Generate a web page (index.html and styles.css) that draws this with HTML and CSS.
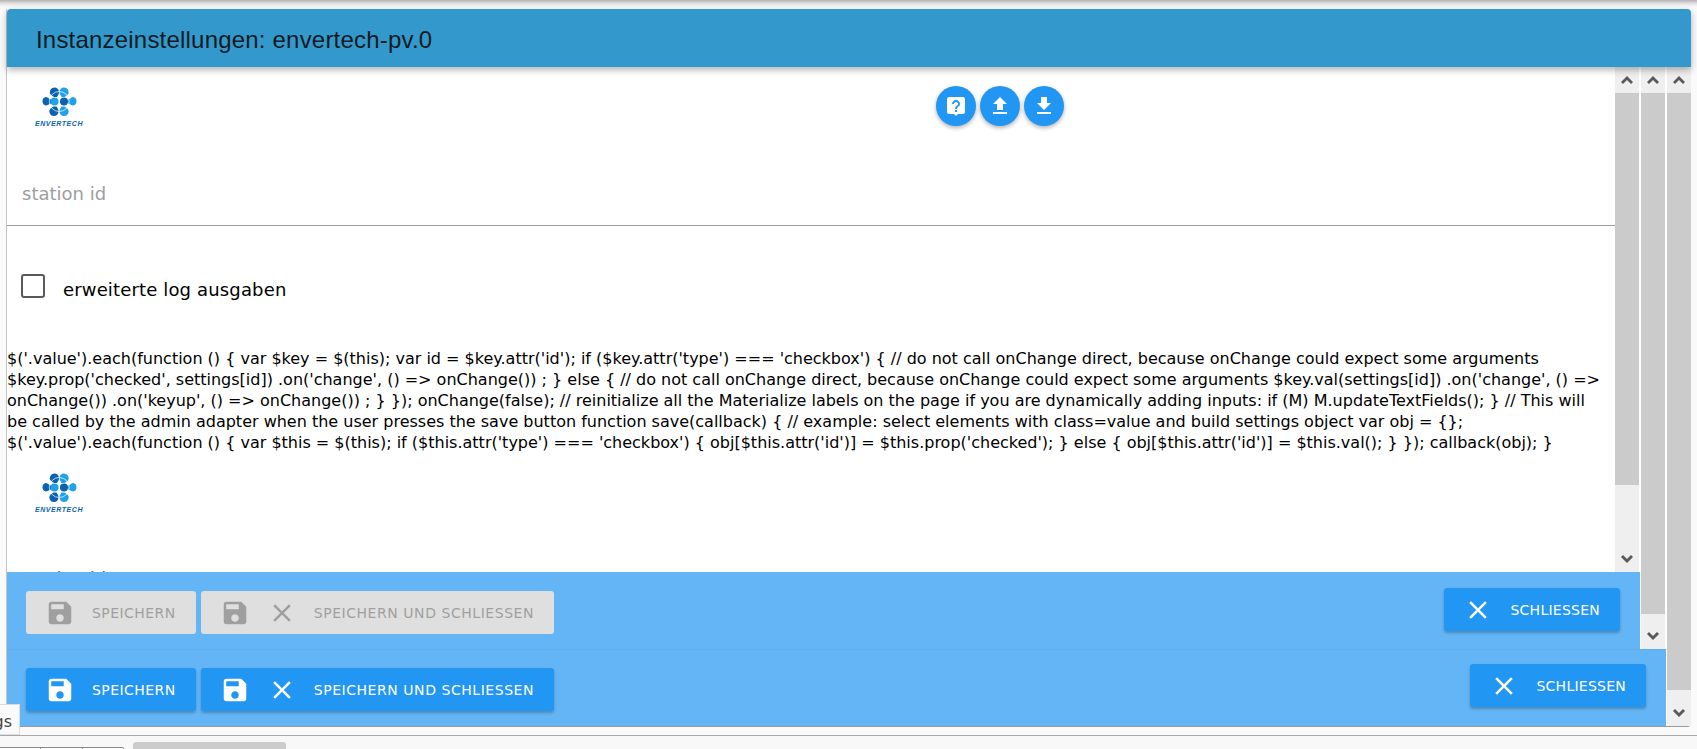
FILE: index.html
```html
<!DOCTYPE html>
<html lang="de">
<head>
<meta charset="utf-8">
<title>Instanzeinstellungen</title>
<link rel="stylesheet" href="styles.css">
</head>
<body>
<svg class="defs" width="0" height="0" aria-hidden="true">
  <symbol id="i-save" viewBox="0 0 24 24"><path d="M17 3H5c-1.11 0-2 .9-2 2v14c0 1.1.89 2 2 2h14c1.1 0 2-.9 2-2V7l-4-4zm-5 16c-1.66 0-3-1.34-3-3s1.34-3 3-3 3 1.34 3 3-1.34 3-3 3zm3-10H5V5h10v4z"/></symbol>
  <symbol id="i-close" viewBox="0 0 24 24"><path d="M19 6.41L17.59 5 12 10.59 6.41 5 5 6.41 10.59 12 5 17.59 6.41 19 12 13.41 17.59 19 19 17.59 13.41 12z"/></symbol>
  <symbol id="i-up" viewBox="0 0 12 8"><path d="M6 0l6 6-2 2-4-4-4 4-2-2z"/></symbol>
  <symbol id="i-down" viewBox="0 0 12 8"><path d="M6 8L0 2l2-2 4 4 4-4 2 2z"/></symbol>
  <symbol id="i-logo" viewBox="0 0 50 38">
    <path class="logo-dark" d="M20.500 2.500a4.500 4.500 0 0 1 4.500 4.500c0 2-1 3.500-2 5h-3l-3-2a4.500 4.500 0 0 1 3.500-7.500z"/>
    <path class="logo-light" d="M30 2.500a4.500 4.500 0 0 1 3.500 7.500l-3 2h-3c-1-1.500-2-3-2-5A4.500 4.500 0 0 1 30 2.500z"/>
    <path class="logo-dark" d="M11.500 12c2 0 3.500 2 5.500 2.500v4c-2 .5-3.500 2-5.500 2a4.500 4.500 0 0 1 0-8.500z"/>
    <path class="logo-light" d="M39.500 12c-2 0-3.500 2-5.500 2.500v4c2 .5 3.500 2 5.500 2a4.500 4.500 0 0 0 0-8.500z"/>
    <circle class="logo-light" cx="20.500" cy="16.500" r="4"/>
    <circle class="logo-dark" cx="30" cy="16.500" r="4"/>
    <path class="logo-dark" d="M20 31a4.500 4.500 0 0 1-3.500-7.500l3-2h3c1 1.500 2 3 2 5a4.500 4.500 0 0 1-4.500 4.500z"/>
    <path class="logo-light" d="M30 31a4.500 4.500 0 0 0 3.500-7.500l-3-2h-3c-1 1.500-2 3-2 5a4.500 4.500 0 0 0 4.500 4.500z"/>
    <circle class="logo-ring" cx="25.250" cy="16.500" r="10"/>
  </symbol>
</svg>
<div class="shade"></div>
<main class="dialog">
  <header class="dialog-head"><h1 class="dialog-title">Instanzeinstellungen: envertech-pv.0</h1></header>
  <div class="layer">
    <div class="layer-main">
      <div class="layer">
        <div class="layer-main layer-main-mid">
          <div class="layer">
            <div class="content">
              <section class="copy">
                <div class="top-row">
                  <div class="logo"><svg class="logo-mark"><use href="#i-logo"/></svg><span class="logo-text">ENVERTECH</span></div>
                  <div class="fabs">
                    <span class="fab"><svg viewBox="0 0 24 24"><path d="M5 3h14c1.100 0 2 .9 2 2v13c0 1.100-.9 2-2 2h-5l-2 2-2-2H5c-1.100 0-2-.9-2-2V5c0-1.100.9-2 2-2zm6 13v2h2v-2zm1-10c-2.200 0-4 1.800-4 4h2c0-1.100.9-2 2-2s2 .9 2 2c0 2-3 1.800-3 5h2c0-2.300 3-2.500 3-5 0-2.200-1.800-4-4-4z"/></svg></span>
                    <span class="fab"><svg viewBox="0 0 24 24"><path d="M9 16h6v-6h4l-7-7-7 7h4zm-4 2h14v2H5z"/></svg></span>
                    <span class="fab"><svg viewBox="0 0 24 24"><path d="M19 9h-4V3H9v6H5l7 7 7-7zM5 18v2h14v-2H5z"/></svg></span>
                  </div>
                </div>
                <div class="field"><span class="field-label">station id</span></div>
                <label class="check"><span class="check-box"></span><span class="check-text">erweiterte log ausgaben</span></label>
                <p class="code">$('.value').each(function () { var $key = $(this); var id = $key.attr('id'); if ($key.attr('type') === 'checkbox') { // do not call onChange direct, because onChange could expect some arguments<br>$key.prop('checked', settings[id]) .on('change', () =&gt; onChange()) ; } else { // do not call onChange direct, because onChange could expect some arguments $key.val(settings[id]) .on('change', () =&gt;<br>onChange()) .on('keyup', () =&gt; onChange()) ; } }); onChange(false); // reinitialize all the Materialize labels on the page if you are dynamically adding inputs: if (M) M.updateTextFields(); } // This will<br>be called by the admin adapter when the user presses the save button function save(callback) { // example: select elements with class=value and build settings object var obj = {};<br>$('.value').each(function () { var $this = $(this); if ($this.attr('type') === 'checkbox') { obj[$this.attr('id')] = $this.prop('checked'); } else { obj[$this.attr('id')] = $this.val(); } }); callback(obj); }</p>
              </section>
              <section class="copy copy-repeat">
                <div class="top-row">
                  <div class="logo"><svg class="logo-mark"><use href="#i-logo"/></svg><span class="logo-text">ENVERTECH</span></div>
                </div>
                <div class="field"><span class="field-label field-label-dark">station id</span></div>
              </section>
            </div>
            <div class="sbar sbar-1">
              <span class="sbar-btn"><svg><use href="#i-up"/></svg></span>
              <span class="sbar-thumb"></span>
              <span class="sbar-track"></span>
              <span class="sbar-btn"><svg><use href="#i-down"/></svg></span>
            </div>
          </div>
          <footer class="foot foot-1">
            <div class="foot-left">
              <span class="btn btn-off"><svg><use href="#i-save"/></svg><span>SPEICHERN</span></span>
              <span class="btn btn-off"><svg><use href="#i-save"/></svg><svg><use href="#i-close"/></svg><span>SPEICHERN UND SCHLIESSEN</span></span>
            </div>
            <span class="btn btn-close"><svg><use href="#i-close"/></svg><span>SCHLIESSEN</span></span>
          </footer>
        </div>
        <div class="sbar sbar-2">
          <span class="sbar-btn"><svg><use href="#i-up"/></svg></span>
          <span class="sbar-thumb"></span>
          <span class="sbar-track"></span>
          <span class="sbar-btn"><svg><use href="#i-down"/></svg></span>
        </div>
      </div>
      <footer class="foot foot-2">
        <div class="foot-left">
          <span class="btn"><svg><use href="#i-save"/></svg><span>SPEICHERN</span></span>
          <span class="btn"><svg><use href="#i-save"/></svg><svg><use href="#i-close"/></svg><span>SPEICHERN UND SCHLIESSEN</span></span>
        </div>
        <span class="btn btn-close"><svg><use href="#i-close"/></svg><span>SCHLIESSEN</span></span>
      </footer>
    </div>
    <div class="sbar sbar-3">
      <span class="sbar-btn"><svg><use href="#i-up"/></svg></span>
      <span class="sbar-thumb"></span>
      <span class="sbar-track"></span>
      <span class="sbar-btn"><svg><use href="#i-down"/></svg></span>
    </div>
  </div>
</main>
<nav class="bottom">
  <div class="tabs"><span class="tab"></span><span class="tab"></span><span class="tab"></span></div>
  <span class="tab-active"></span>
</nav>
<div class="tip">gs</div>
</body>
</html>
```
FILE: styles.css
```css
* { box-sizing: border-box; }
html, body { margin: 0; padding: 0; }
body {
  position: relative;
  width: 1697px;
  height: 749px;
  overflow: hidden;
  background: #fafafa;
  font-family: "DejaVu Sans", sans-serif;
  color: #000;
}
.defs { position: absolute; }
.shade {
  height: 9px;
  background: linear-gradient(#b4b4b4, #e6e6e6 4px, #fafafa 7px);
}
.dialog {
  display: flex;
  flex-direction: column;
  width: 1685px;
  height: 718px;
  margin-left: 6px;
  background: #fff;
  border-left: 1px solid #c4c4c4;
  border-bottom: 1px solid #9a9a9a;
  border-radius: 0 0 4px 0;
}
.dialog-head {
  position: relative;
  z-index: 2;
  height: 58px;
  padding: 3px 0 0 29px;
  display: flex;
  align-items: center;
  background: #3399cc;
  border-radius: 4px 4px 0 0;
  box-shadow: 0 3px 7px rgba(0, 0, 0, .3);
}
.dialog-title {
  margin: 0;
  font: 400 24px "Liberation Sans", Arial, sans-serif;
  letter-spacing: .2px;
  color: #0f1a22;
}
.layer { display: flex; flex: 1; min-height: 0; }
.layer-main { display: flex; flex-direction: column; flex: 1; min-width: 0; }
.content {
  flex: 1;
  min-width: 0;
  overflow: hidden;
  background: #fff;
}
.copy { height: 386px; }
.top-row {
  display: flex;
  height: 87px;
  padding-top: 18px;
}
.logo {
  width: 60px;
  margin-left: 22px;
  display: flex;
  flex-direction: column;
  align-items: center;
}
.logo-mark { width: 50px; height: 38px; flex: none; }
.logo-dark { fill: #0d62b0; }
.logo-light { fill: #1fa3e6; }
.logo-ring { fill: none; stroke: #fff; stroke-width: .7; }
.logo-text {
  margin-top: -3px;
  font: italic 700 7px/8px "Liberation Sans", sans-serif;
  letter-spacing: .55px;
  color: #0d62b0;
}
.fabs {
  display: flex;
  gap: 4px;
  margin-left: 847px;
  align-self: flex-start;
  margin-top: 1px;
}
.fab {
  width: 40px;
  height: 40px;
  border-radius: 50%;
  background: #2196f3;
  display: flex;
  align-items: center;
  justify-content: center;
  box-shadow: 0 2px 4px rgba(0, 0, 0, .3);
}
.fab svg { width: 24px; height: 24px; fill: #fff; }
.field {
  height: 72px;
  border-bottom: 1px solid #9e9e9e;
  padding: 27px 0 0 15px;
}
.copy-repeat .field { padding-top: 26px; }
.field-label { font-size: 18px; line-height: 26px; color: #9e9e9e; }
.field-label-dark { color: #666; }
.check {
  display: flex;
  align-items: center;
  gap: 18px;
  margin: 48px 0 0 14px;
  height: 24px;
}
.check-box {
  width: 24px;
  height: 24px;
  border: 2px solid #5a5a5a;
  border-radius: 3px;
}
.check-text { font-size: 18px; letter-spacing: .15px; padding-top: 6px; }
.code {
  margin: 50px 0 0;
  font-size: 16px;
  line-height: 21px;
  white-space: nowrap;
}
.sbar {
  width: 24px;
  display: flex;
  flex-direction: column;
  flex: none;
  background: #efefef;
}
.sbar-1 { margin-right: 1px; }
.sbar-2 { margin-left: 1px; margin-right: 1px; }
.sbar-3 { margin-left: 1px; }
.sbar-btn {
  height: 26px;
  flex: none;
  display: flex;
  align-items: center;
  justify-content: center;
}
.sbar-btn svg { width: 12px; height: 8px; fill: #5a5a5a; }
.sbar-thumb { background: #cbcbcb; flex: none; }
.sbar-1 .sbar-thumb { height: 392px; }
.sbar-2 .sbar-thumb { height: 521px; }
.sbar-3 .sbar-thumb { height: 597px; }
.sbar-track { flex: 1; }
.foot {
  display: flex;
  justify-content: space-between;
  align-items: flex-start;
  background: #64b5f6;
  padding: 0 20px 0 19px;
}
.foot-1 { height: 77px; }
.foot-2 { height: 77px; border-top: 1px solid #5eaef0; }
.foot-left { display: flex; gap: 5px; margin-top: 19px; }
.foot-2 .foot-left { margin-top: 18px; }
.btn {
  display: flex;
  align-items: center;
  gap: 17px;
  height: 43px;
  padding: 0 20px 0 19px;
  border-radius: 3px;
  background: #2196f3;
  color: #fff;
  font-size: 14px;
  letter-spacing: .55px;
  white-space: nowrap;
  box-shadow: 0 2px 3px rgba(0, 0, 0, .25);
}
.btn svg { width: 30px; height: 30px; fill: currentColor; flex: none; }
.foot-left .btn:first-child { letter-spacing: .45px; }
.btn-off { background: #dfdfdf; color: #9f9f9f; box-shadow: none; }
.btn-close { margin-top: 16px; letter-spacing: .25px; }
.foot-2 .btn-close { margin-top: 14px; }
.bottom {
  display: flex;
  align-items: flex-end;
  gap: 9px;
  height: 14px;
  margin-top: 8px;
  border-top: 1px solid #a8a8a8;
  background: #f8f8f8;
}
.tabs {
  display: flex;
  width: 124px;
  height: 2px;
  border-top: 1px solid #888;
  border-right: 1px solid #888;
  border-radius: 0 3px 0 0;
  background: #fff;
}
.tab { flex: 1; border-left: 1px solid #888; }
.tab:first-child { border-left: 0; }
.tab-active {
  width: 153px;
  height: 7px;
  background: #ccc;
  border-radius: 3px 3px 0 0;
}
.tip {
  position: absolute;
  left: 0;
  top: 704px;
  width: 20px;
  height: 31px;
  overflow: hidden;
  direction: rtl;
  background: #fafafa;
  border: 1px solid #ddd;
  border-left: 0;
  padding-right: 7px;
  font-size: 16px;
  line-height: 33px;
  color: #444;
  white-space: nowrap;
}
```
